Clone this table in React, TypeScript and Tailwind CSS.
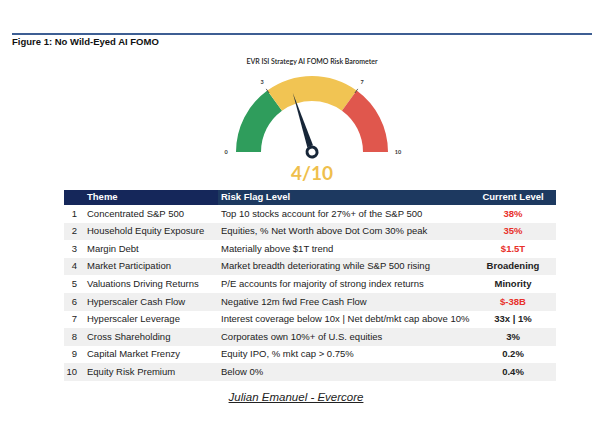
import React from "react";

type Row = { n: number; theme: string; flag: string; level: string; red?: boolean };

const rows: Row[] = [
  { n: 1, theme: "Concentrated S&P 500", flag: "Top 10 stocks account for 27%+ of the S&P 500", level: "38%", red: true },
  { n: 2, theme: "Household Equity Exposure", flag: "Equities, % Net Worth above Dot Com 30% peak", level: "35%", red: true },
  { n: 3, theme: "Margin Debt", flag: "Materially above $1T trend", level: "$1.5T", red: true },
  { n: 4, theme: "Market Participation", flag: "Market breadth deteriorating while S&P 500 rising", level: "Broadening" },
  { n: 5, theme: "Valuations Driving Returns", flag: "P/E accounts for majority of strong index returns", level: "Minority" },
  { n: 6, theme: "Hyperscaler Cash Flow", flag: "Negative 12m fwd Free Cash Flow", level: "$-38B", red: true },
  { n: 7, theme: "Hyperscaler Leverage", flag: "Interest coverage below 10x | Net debt/mkt cap above 10%", level: "33x | 1%" },
  { n: 8, theme: "Cross Shareholding", flag: "Corporates own 10%+ of U.S. equities", level: "3%" },
  { n: 9, theme: "Capital Market Frenzy", flag: "Equity IPO, % mkt cap > 0.75%", level: "0.2%" },
  { n: 10, theme: "Equity Risk Premium", flag: "Below 0%", level: "0.4%" },
];

function Gauge() {
  return (
    <svg width="200" height="92" viewBox="0 0 200 92" className="block">
      <path d="M24 82 A76 76 0 0 1 55.33 20.52 L70.02 40.74 A51 51 0 0 0 49 82 Z" fill="#2f9d5c" />
      <path d="M55.33 20.52 A76 76 0 0 1 144.67 20.52 L129.98 40.74 A51 51 0 0 0 70.02 40.74 Z" fill="#f1c453" />
      <path d="M144.67 20.52 A76 76 0 0 1 176 82 L151 82 A51 51 0 0 0 129.98 40.74 Z" fill="#e0574d" />
      <line x1="54.2" y1="18.9" x2="57.1" y2="23" stroke="#333" strokeWidth="0.8" />
      <line x1="145.8" y1="18.9" x2="142.9" y2="23" stroke="#333" strokeWidth="0.8" />
      <g fontFamily="Lato, 'Noto Sans', sans-serif" fontSize="5.5" fill="#333" fontWeight="700" textAnchor="middle">
        <text x="14" y="84">0</text>
        <text x="50" y="14">3</text>
        <text x="150" y="14">7</text>
        <text x="186" y="84">10</text>
      </g>
      <g transform="translate(100 82) rotate(-18)">
        <polygon points="0,-62 3,-6 -3,-6" fill="#172638" />
        <circle cx="0" cy="0" r="5" fill="#ffffff" stroke="#172638" strokeWidth="3" />
      </g>
    </svg>
  );
}

export default function App() {
  return (
    <div className="w-[607px] h-[423px] bg-white overflow-hidden pt-[33px]" style={{ fontFamily: "'Liberation Sans', Arial, sans-serif" }}>
      <div className="ml-[12px] w-[580px] h-[2px] bg-[#3d5e93]" />
      <div className="ml-[12px] mt-[1px] text-[9.5px] leading-[12px] font-bold text-[#111]">Figure 1: No Wild-Eyed AI FOMO</div>

      <div className="ml-[212px] w-[200px] flex flex-col items-center">
        <div className="mt-[9px] text-[7px] leading-[9px] text-[#222] font-semibold font-['Lato',sans-serif]">EVR ISI Strategy AI FOMO Risk Barometer</div>
        <div className="mt-[4px]">
          <Gauge />
        </div>
        <div className="mt-[1px] text-[19px] leading-[20px] font-bold text-[#efbf4d] font-['Lato',sans-serif]">4/10</div>
      </div>

      <div className="ml-[64px] mt-[7px] w-[492px] text-[9.5px] text-[#222]">
        <div className="flex h-[15px] items-center text-white font-bold">
          <div className="flex h-full w-[154px] items-center bg-[#15275a]">
            <div className="w-[16px]" />
            <div className="pl-[7px]">Theme</div>
          </div>
          <div className="flex h-full flex-1 items-center bg-[#1d3960]">
            <div className="w-[252px] pl-[3px]">Risk Flag Level</div>
            <div className="flex-1 text-center">Current Level</div>
          </div>
        </div>
        {rows.map((r) => (
          <div key={r.n} className={`flex h-[17.6px] items-center ${r.n % 2 === 0 ? "bg-[#f0f0f0]" : "bg-white"}`}>
            <div className="w-[16px] text-right pr-[3px]">{r.n}</div>
            <div className="w-[138px] pl-[7px] whitespace-nowrap">{r.theme}</div>
            <div className="w-[252px] pl-[3px] whitespace-nowrap">{r.flag}</div>
            <div className={`flex-1 text-center font-bold ${r.red ? "text-[#e8302a]" : "text-[#222]"}`}>{r.level}</div>
          </div>
        ))}
      </div>

      <div className="mt-[9px] w-[592px] text-center text-[11.5px] leading-[14px] italic underline text-[#222]">Julian Emanuel - Evercore</div>
    </div>
  );
}
